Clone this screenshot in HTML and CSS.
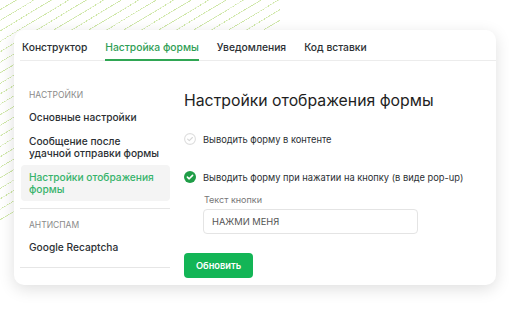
FILE: index.html
```html
<!DOCTYPE html>
<html lang="ru">

<head>
    <meta charset="UTF-8" />
    <title>Настройка формы</title>
    <link rel="stylesheet" href="styles.css">
</head>

<body>
    <div class="card">
        <div class="tabs">
            <span class="tab">Конструктор</span>
            <span class="tab active">Настройка формы</span>
            <span class="tab">Уведомления</span>
            <span class="tab">Код вставки</span>
        </div>

        <div class="content">
            <!-- левое меню -->
            <div class="side">
                <div class="side-title">Настройки</div>
                <div class="side-item">Основные настройки</div>
                <div class="side-item">Сообщение после<br />удачной отправки формы</div>
                <div class="side-item current">Настройки отображения<br />формы</div>
                <div class="side-line"></div>
                <div class="side-title second">Антиспам</div>
                <div class="side-item">Google Recaptcha</div>
                <div class="side-line last"></div>
            </div>

            <!-- форма -->
            <div class="main">
                <h1 class="head">Настройки отображения формы</h1>

                <div class="option">
                    <svg class="check" width="12" height="12" viewBox="0 0 12 12">
                        <circle cx="6" cy="6" r="5.4" fill="#fff" stroke="#dedede" stroke-width="1.1" />
                        <path d="M3.6 6.1 L5.3 7.7 L8.4 4.5" fill="none" stroke="#d6d6d6" stroke-width="1.1" stroke-linecap="round" stroke-linejoin="round" />
                    </svg>
                    <span>Выводить форму в контенте</span>
                </div>

                <div class="option second">
                    <svg class="check" width="12" height="12" viewBox="0 0 12 12">
                        <circle cx="6" cy="6" r="6" fill="#1f9d47" />
                        <path d="M3.4 6.1 L5.2 7.8 L8.6 4.4" fill="none" stroke="#fff" stroke-width="1.6" stroke-linecap="round" stroke-linejoin="round" />
                    </svg>
                    <span>Выводить форму при нажатии на кнопку (в виде pop-up)</span>
                </div>

                <div class="field">
                    <div class="label">Текст кнопки</div>
                    <div class="input">НАЖМИ МЕНЯ</div>
                </div>

                <button class="btn">Обновить</button>
            </div>
        </div>
    </div>
</body>

</html>
```

FILE: styles.css
```css
* {
    font-family: Inter, "Noto Sans", sans-serif;
    box-sizing: border-box;
}

body {
    margin: 0;
    padding: 30px 13px 0 14px;
    height: 316px;
    background:
        repeating-linear-gradient(59deg, rgba(255, 255, 255, 0.55) 0 1px, transparent 1px 2px) 0 0 / 280px 222px no-repeat,
        repeating-linear-gradient(149deg, transparent 0 8px, #cde6a4 8px 9px) 0 0 / 280px 222px no-repeat,
        #fff;
}

.card {
    height: 255px;
    background: #fff;
    border-radius: 10px;
    box-shadow: 0 4px 16px rgba(0, 0, 0, 0.13);
}

.tabs {
    display: flex;
    gap: 18px;
    margin-left: 6px;
    padding: 10px 0 0 2px;
    border-bottom: 1px solid #ececec;
}

.tab {
    font-size: 10.3px;
    font-weight: 500;
    line-height: 14px;
    color: #2b2f33;
    padding-bottom: 5px;
    border-bottom: 2px solid transparent;
    margin-bottom: -1px;
}

.tab.active {
    color: #2f9e55;
    border-bottom-color: #2fa653;
}

.content {
    display: flex;
    padding-left: 6px;
}

.side {
    width: 150px;
    padding-top: 28px;
}

.side-title {
    font-size: 8.5px;
    line-height: 12px;
    text-transform: uppercase;
    color: #8a8a8a;
    padding-left: 9px;
    margin-bottom: 4px;
}

.side-title.second {
    margin-top: 10px;
}

.side-item {
    font-size: 10.2px;
    font-weight: 500;
    line-height: 12px;
    color: #2b2f33;
    padding: 6px 0 6px 9px;
    border-radius: 4px;
    white-space: nowrap;
}

.side-item.current {
    background: #f4f4f4;
    color: #37b36b;
    margin-left: 1px;
    padding-left: 8px;
}

.side-line {
    height: 1px;
    background: #e6e6e6;
    margin-top: 7px;
}

.side-line.last {
    margin-top: 8px;
}

.main {
    padding: 30px 0 0 14px;
    flex: 1;
}

.head {
    margin: 0;
    font-size: 15.8px;
    font-weight: 400;
    line-height: 20px;
    color: #1e1e1e;
}

.option {
    display: flex;
    align-items: center;
    gap: 7px;
    height: 14px;
    margin-top: 21px;
    font-size: 9.3px;
    color: #2b2f33;
}

.option.second {
    margin-top: 24px;
}

.field {
    margin-left: 19px;
}

.label {
    margin-top: 10px;
    font-size: 9px;
    line-height: 12px;
    color: #777;
    padding-left: 1px;
}

.input {
    margin-top: 3px;
    width: 215px;
    height: 25px;
    border: 1px solid #e4e4e4;
    border-radius: 4px;
    padding-left: 8px;
    font-size: 9.3px;
    line-height: 23px;
    color: #555;
}

.btn {
    display: block;
    margin-top: 19px;
    width: 69px;
    height: 25px;
    border: none;
    border-radius: 4px;
    background: #13b556;
    color: #fff;
    font-size: 9.3px;
    font-weight: 600;
    padding: 0;
}
```
